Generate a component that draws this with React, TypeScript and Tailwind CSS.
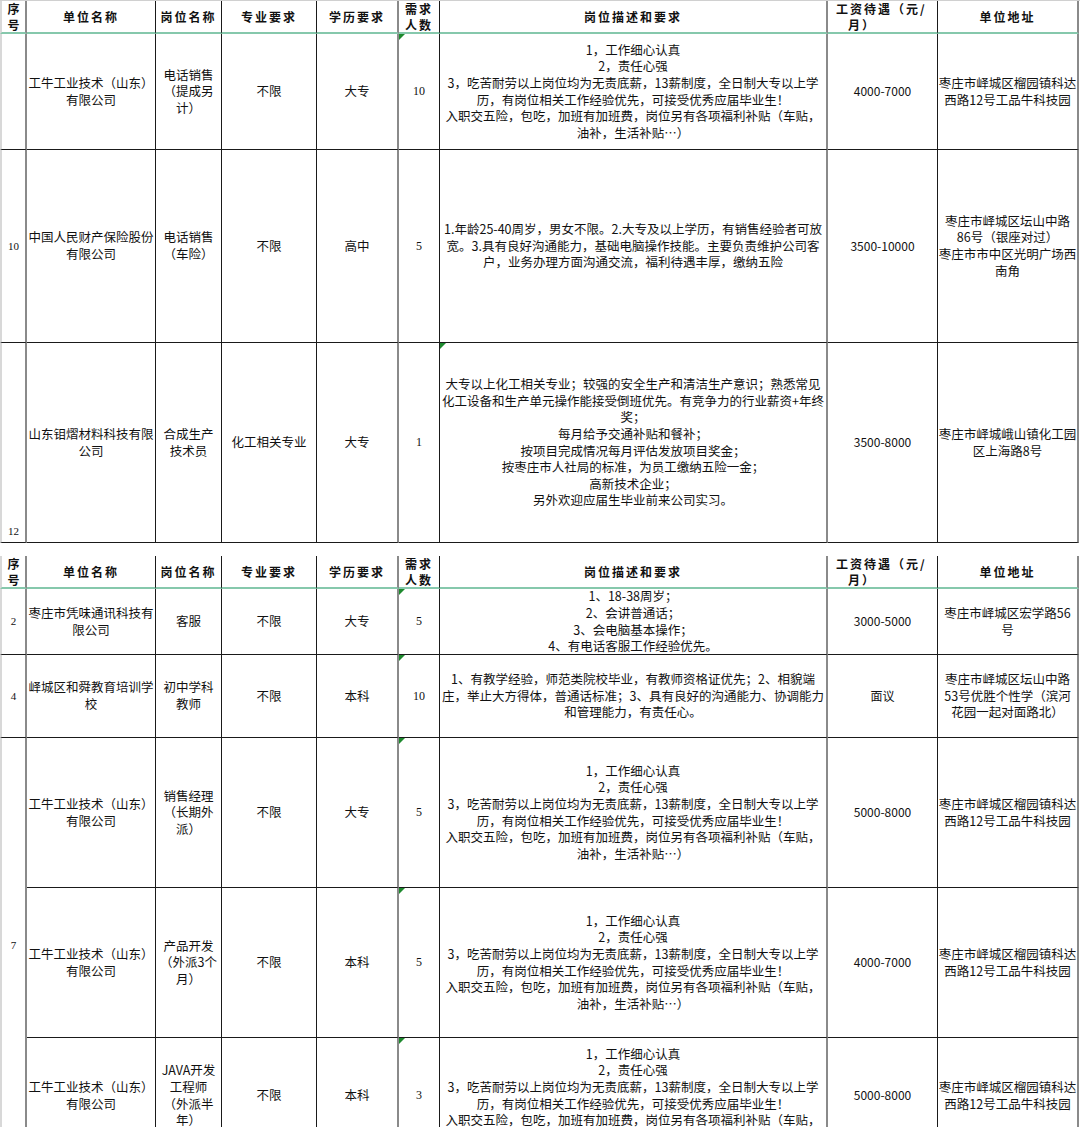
import React from 'react';

const COLS = 'grid grid-cols-[27px_129px_66px_95px_82px_41px_388px_110px_141px]';
const FONT = { fontFamily: '"Noto Sans CJK SC", "Noto Sans", sans-serif' };

type Row = {
  seq?: string;
  seqBottom?: boolean;
  company: string[];
  post: string[];
  major: string;
  edu: string;
  count: string;
  desc: string[];
  salary: string;
  addr: string[];
  markCount?: boolean;
  markDesc?: boolean;
};

const gongniu = (n: string) => [
  '1，工作细心认真',
  '2，责任心强',
  '3，吃苦耐劳以上岗位均为无责底薪，13薪制度，全日制大专以上学',
  '历，有岗位相关工作经验优先，可接受优秀应届毕业生！',
  '入职交五险，包吃，加班有加班费，岗位另有各项福利补贴（车贴，',
  '油补，生活补贴…）' + n,
];

const table1: Row[] = [
  {
    company: ['工牛工业技术（山东）', '有限公司'],
    post: ['电话销售', '（提成另', '计）'],
    major: '不限',
    edu: '大专',
    count: '10',
    desc: gongniu(''),
    salary: '4000-7000',
    addr: ['枣庄市峄城区榴园镇科达', '西路12号工品牛科技园'],
    markCount: true,
  },
  {
    seq: '10',
    company: ['中国人民财产保险股份', '有限公司'],
    post: ['电话销售', '（车险）'],
    major: '不限',
    edu: '高中',
    count: '5',
    desc: [
      '1.年龄25-40周岁，男女不限。2.大专及以上学历，有销售经验者可放',
      '宽。3.具有良好沟通能力，基础电脑操作技能。主要负责维护公司客',
      '户，业务办理方面沟通交流，福利待遇丰厚，缴纳五险',
    ],
    salary: '3500-10000',
    addr: ['枣庄市峄城区坛山中路', '86号（银座对过）', '枣庄市市中区光明广场西', '南角'],
  },
  {
    seq: '12',
    seqBottom: true,
    company: ['山东钼熠材料科技有限', '公司'],
    post: ['合成生产', '技术员'],
    major: '化工相关专业',
    edu: '大专',
    count: '1',
    desc: [
      '大专以上化工相关专业；较强的安全生产和清洁生产意识；熟悉常见',
      '化工设备和生产单元操作能接受倒班优先。有竞争力的行业薪资+年终',
      '奖；',
      '每月给予交通补贴和餐补；',
      '按项目完成情况每月评估发放项目奖金；',
      '按枣庄市人社局的标准，为员工缴纳五险一金；',
      '高新技术企业；',
      '另外欢迎应届生毕业前来公司实习。',
    ],
    salary: '3500-8000',
    addr: ['枣庄市峄城峨山镇化工园', '区上海路8号'],
    markDesc: true,
  },
];

const table2: Row[] = [
  {
    seq: '2',
    company: ['枣庄市凭味通讯科技有', '限公司'],
    post: ['客服'],
    major: '不限',
    edu: '大专',
    count: '5',
    desc: ['1、18-38周岁；', '2、会讲普通话；', '3、会电脑基本操作；', '4、有电话客服工作经验优先。'],
    salary: '3000-5000',
    addr: ['枣庄市峄城区宏学路56', '号'],
    markCount: true,
  },
  {
    seq: '4',
    company: ['峄城区和舜教育培训学', '校'],
    post: ['初中学科', '教师'],
    major: '不限',
    edu: '本科',
    count: '10',
    desc: [
      '1、有教学经验，师范类院校毕业，有教师资格证优先；2、相貌端',
      '庄，举止大方得体，普通话标准；3、具有良好的沟通能力、协调能力',
      '和管理能力，有责任心。',
    ],
    salary: '面议',
    addr: ['枣庄市峄城区坛山中路', '53号优胜个性学（滨河', '花园一起对面路北）'],
    markCount: true,
  },
  {
    company: ['工牛工业技术（山东）', '有限公司'],
    post: ['销售经理', '（长期外', '派）'],
    major: '不限',
    edu: '大专',
    count: '5',
    desc: gongniu(''),
    salary: '5000-8000',
    addr: ['枣庄市峄城区榴园镇科达', '西路12号工品牛科技园'],
    markCount: true,
  },
  {
    company: ['工牛工业技术（山东）', '有限公司'],
    post: ['产品开发', '（外派3个', '月）'],
    major: '不限',
    edu: '本科',
    count: '5',
    desc: gongniu(''),
    salary: '4000-7000',
    addr: ['枣庄市峄城区榴园镇科达', '西路12号工品牛科技园'],
    markCount: true,
  },
  {
    company: ['工牛工业技术（山东）', '有限公司'],
    post: ['JAVA开发', '工程师', '（外派半', '年）'],
    major: '不限',
    edu: '本科',
    count: '3',
    desc: gongniu(''),
    salary: '5000-8000',
    addr: ['枣庄市峄城区榴园镇科达', '西路12号工品牛科技园'],
    markCount: true,
  },
];

function Mark() {
  return (
    <span className="absolute left-0 top-0 h-0 w-0 border-t-[6px] border-r-[6px] border-t-[#1e8a2e] border-r-transparent" />
  );
}

function Lines({ lines }: { lines: string[] }) {
  return (
    <>
      {lines.map((l, i) => (
        <div key={i} className="whitespace-nowrap">
          {l}
        </div>
      ))}
    </>
  );
}

const cell =
  'relative flex flex-col items-center justify-center text-center border-b border-r border-b-[#1a1a1a] border-r-[#1a1a1a] overflow-visible';

function Header() {
  const h =
    'flex flex-col items-center justify-center text-center border-r border-r-[#1a1a1a] border-b-2 border-b-[#86c8ac] font-bold text-[12px] leading-[16px] tracking-[2px] text-[#111]';
  return (
    <>
      <div className={`${h} border-l-2 border-l-[#d8d8d8] border-r-2 border-r-[#8a8a8a] tracking-normal`}>
        <div>序</div>
        <div>号</div>
      </div>
      <div className={h}>单位名称</div>
      <div className={`${h} tracking-[1px]`}>岗位名称</div>
      <div className={h}>专业要求</div>
      <div className={`${h} border-r-2 border-r-[#8a8a8a]`}>学历要求</div>
      <div className={`${h} tracking-[1px]`}>
        <div>需求</div>
        <div>人数</div>
      </div>
      <div className={`${h} border-r-2 border-r-[#8a8a8a]`}>岗位描述和要求</div>
      <div className={`${h} tracking-[1px] items-stretch`}>
        <div className="pl-[8px] text-left">工资待遇（元/</div>
        <div className="pl-[20px] text-left">月）</div>
      </div>
      <div className={`${h} border-r-2 border-r-[#8a8a8a]`}>单位地址</div>
    </>
  );
}

function Body({ r, withSeq = true }: { r: Row; withSeq?: boolean }) {
  return (
    <>
      {withSeq && (
        <div
          className={`${cell} border-l-2 border-l-[#d8d8d8] border-r-2 border-r-[#8a8a8a] ${
            r.seqBottom ? 'justify-end pb-[2px]' : ''
          }`}
          style={{ fontFamily: '"Liberation Serif", serif' }}
        >
          <span className="text-[11px]">{r.seq}</span>
        </div>
      )}
      <div className={cell}>
        <Lines lines={r.company} />
      </div>
      <div className={cell}>
        <Lines lines={r.post} />
      </div>
      <div className={cell}>{r.major}</div>
      <div className={`${cell} border-r-2 border-r-[#8a8a8a]`}>{r.edu}</div>
      <div className={cell} style={{ fontFamily: '"Liberation Serif", serif' }}>
        {r.markCount && <Mark />}
        <span className="text-[12px]">{r.count}</span>
      </div>
      <div className={`${cell} border-r-2 border-r-[#8a8a8a]`}>
        {r.markDesc && <Mark />}
        <Lines lines={r.desc} />
      </div>
      <div className={`${cell} text-[12px]`}>{r.salary}</div>
      <div className={`${cell} border-r-2 border-r-[#8a8a8a]`}>
        <Lines lines={r.addr} />
      </div>
    </>
  );
}

export default function App() {
  return (
    <div
      className="h-[1127px] w-[1080px] overflow-hidden bg-white text-[12.5px] leading-[16.6px] text-[#111]"
      style={FONT}
    >
      {/* 第一张表 */}
      <div className={`${COLS} grid-rows-[33px_116px_193px_200px] border-t border-t-[#d0d0d0]`}>
        <Header />
        {table1.map((r, i) => (
          <Body key={i} r={r} />
        ))}
      </div>

      <div className="h-[13px]" />

      {/* 第二张表 */}
      <div className={`${COLS} grid-rows-[33px_66px_83px_150px_150px_116px]`}>
        <Header />
        <Body r={table2[0]} />
        <Body r={table2[1]} />
        <div
          className={`${cell} row-span-3 border-l-2 border-l-[#d8d8d8] border-r-2 border-r-[#8a8a8a]`}
          style={{ fontFamily: '"Liberation Serif", serif' }}
        >
          <span className="text-[11px]">7</span>
        </div>
        <Body r={table2[2]} withSeq={false} />
        <Body r={table2[3]} withSeq={false} />
        <Body r={table2[4]} withSeq={false} />
      </div>
    </div>
  );
}
